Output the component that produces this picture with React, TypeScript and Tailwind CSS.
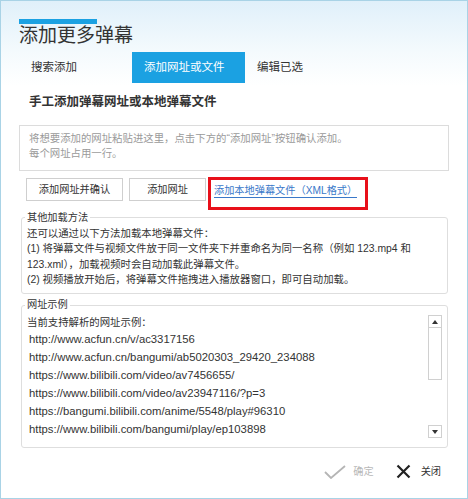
import React from "react";

const URLS = [
  "http://www.acfun.cn/v/ac3317156",
  "http://www.acfun.cn/bangumi/ab5020303_29420_234088",
  "https://www.bilibili.com/video/av7456655/",
  "https://www.bilibili.com/video/av23947116/?p=3",
  "https://bangumi.bilibili.com/anime/5548/play#96310",
  "https://www.bilibili.com/bangumi/play/ep103898",
];

const TABS = ["搜索添加", "添加网址或文件", "编辑已选"];

function Scrollbar() {
  return (
    <div className="flex w-[14px] shrink-0 flex-col">
      <div className="flex h-[13px] items-center justify-center border border-[#d0d0d0] bg-white">
        <svg width="6" height="4" viewBox="0 0 6 4">
          <path d="M0 4 L3 0 L6 4 Z" fill="#333" />
        </svg>
      </div>
      <div className="h-[52px] border border-t-0 border-[#d0d0d0] bg-white" />
      <div className="flex-1" />
      <div className="flex h-[13px] items-center justify-center border border-[#d0d0d0] bg-white">
        <svg width="6" height="4" viewBox="0 0 6 4">
          <path d="M0 0 L6 0 L3 4 Z" fill="#333" />
        </svg>
      </div>
    </div>
  );
}

export default function App() {
  return (
    <div className="h-[499px] w-[468px] overflow-hidden border border-[#a9d3e6] bg-[linear-gradient(to_bottom,#e0f0fa_0px,#f4fafd_50px,#ffffff_85px)] font-['Liberation_Sans','Noto_Sans_CJK_SC',sans-serif] text-[#333]">
      {/* Header */}
      <div className="ml-[18px] mt-[18px] h-[5px] w-[78px] bg-[#1ba1e2]" />
      <h1 className="ml-[18px] mt-[1px] text-[19px] leading-[22px] font-normal text-[#333]">
        添加更多弹幕
      </h1>

      {/* Tabs */}
      <div className="ml-[18px] mt-[5px] flex h-[31px]">
        {TABS.map((t, i) => (
          <div
            key={t}
            className={
              i === 1
                ? "flex w-[113px] items-center bg-[#1ba1e2] pl-[12px] text-[11.5px] text-white"
                : "flex w-[113px] items-center pl-[12px] text-[11.5px] text-[#333]"
            }
          >
            {t}
          </div>
        ))}
      </div>

      <div className="ml-[18px] w-[430px]">
        <h2 className="ml-[10px] mt-[11px] text-[12.5px] leading-[16px] font-bold text-[#333]">
          手工添加弹幕网址或本地弹幕文件
        </h2>

        {/* Textarea */}
        <div className="mt-[15px] h-[46px] border border-[#dcdcdc] bg-white px-[9px] pt-[5px] text-[10.4px] leading-[15px] text-[#9a9a9a]">
          <p>将想要添加的网址粘贴进这里，点击下方的“添加网址”按钮确认添加。</p>
          <p>每个网址占用一行。</p>
        </div>

        {/* Buttons */}
        <div className="mt-[6px] flex items-start pl-[7px]">
          <button className="mt-[1px] h-[23px] w-[97px] border border-[#cfcfcf] bg-white text-[10.2px] text-[#333]">
            添加网址并确认
          </button>
          <button className="ml-[6px] mt-[1px] h-[23px] w-[77px] border border-[#cfcfcf] bg-white text-[10.2px] text-[#333]">
            添加网址
          </button>
          <div className="ml-[2px] h-[33px] w-[160px] border-[3px] border-[#e8101a] pl-[3px] pt-[4px] text-[10.2px] leading-[14px]">
            <span className="border-b border-[#3a78c9] pb-[1px] text-[#3a78c9]">
              添加本地弹幕文件（XML格式）
            </span>
          </div>
        </div>

        {/* Other methods */}
        <fieldset className="ml-[2px] w-[427px] rounded-[3px] border border-[#dedede] pb-[6px] pl-[5px] pr-[5px]">
          <legend className="ml-[-2px] px-[2px] text-[10.2px] leading-[15px] text-[#333]">
            其他加载方法
          </legend>
          <div className="pt-[1px] text-[10.4px] leading-[15.3px] text-[#333]">
            <p>还可以通过以下方法加载本地弹幕文件：</p>
            <p>
              (1) 将弹幕文件与视频文件放于同一文件夹下并重命名为同一名称（例如 123.mp4 和
              123.xml），加载视频时会自动加载此弹幕文件。
            </p>
            <p>(2) 视频播放开始后，将弹幕文件拖拽进入播放器窗口，即可自动加载。</p>
          </div>
        </fieldset>

        {/* URL examples */}
        <fieldset className="ml-[2px] mt-[3px] w-[427px] rounded-[3px] border border-[#dedede] pb-[9px] pl-[5px] pr-[5px]">
          <legend className="ml-[-2px] px-[2px] text-[10.2px] leading-[16px] text-[#333]">
            网址示例
          </legend>
          <div className="mt-[2px] flex">
            <div className="flex-1">
              <p className="text-[10.4px] leading-[15px] text-[#333]">当前支持解析的网址示例：</p>
              <ul className="pl-[2px] text-[11.3px] leading-[18px] text-[#333]">
                {URLS.map((u) => (
                  <li key={u}>{u}</li>
                ))}
              </ul>
            </div>
            <Scrollbar />
          </div>
        </fieldset>
      </div>

      {/* Footer */}
      <div className="mt-[16px] flex items-center justify-end pr-[26px] text-[10.2px]">
        <div className="flex items-center gap-[7px] text-[#b8b8b8]">
          <svg width="22" height="14" viewBox="0 0 22 14">
            <path d="M1 7 L7 13 L21 1" fill="none" stroke="#b5b5b5" strokeWidth="1.8" />
          </svg>
          <span>确定</span>
        </div>
        <div className="ml-[22px] flex items-center gap-[10px] text-[#333]">
          <svg width="15" height="15" viewBox="0 0 15 15">
            <path d="M1.5 1.5 L13.5 13.5 M13.5 1.5 L1.5 13.5" stroke="#222" strokeWidth="2.2" />
          </svg>
          <span>关闭</span>
        </div>
      </div>
    </div>
  );
}
